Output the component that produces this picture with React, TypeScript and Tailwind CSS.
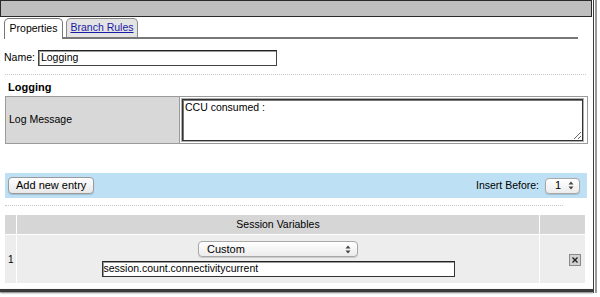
import React from 'react';

const font = { fontFamily: '"Liberation Sans", Arial, sans-serif' };

function Arrows() {
  return (
    <svg width="6" height="9" viewBox="0 0 6 9" className="shrink-0">
      <path d="M3 0.5 L5.5 3.5 H0.5 Z" fill="#444" />
      <path d="M3 8.5 L5.5 5.5 H0.5 Z" fill="#444" />
    </svg>
  );
}

function MacSelect({ label, className }: { label: string; className: string }) {
  return (
    <div
      className={
        'flex items-center justify-between rounded-[4px] border border-[#a8a8a8] bg-gradient-to-b from-white to-[#ececec] shadow-[0_1px_1px_rgba(0,0,0,0.15)] text-[11px] text-black ' +
        className
      }
    >
      <span>{label}</span>
      <Arrows />
    </div>
  );
}

function DeleteIcon() {
  return (
    <div className="w-[12px] h-[12px] border border-[#8a8a8a] bg-[#d0d0d0] flex items-center justify-center">
      <svg width="8" height="8" viewBox="0 0 8 8">
        <path d="M1.5 1.5 L6.5 6.5 M6.5 1.5 L1.5 6.5" stroke="#222" strokeWidth="1.4" />
      </svg>
    </div>
  );
}

export default function App() {
  return (
    <div className="w-[600px] h-[297px] bg-white flex overflow-hidden text-[10px] text-black" style={font}>
      <div className="w-[593px] flex flex-col">
        {/* title bar */}
        <div className="h-[17px] w-[592px] bg-[#bfbfbf] border border-[#2a2a2a]" />

        {/* tabs */}
        <div className="flex items-end h-[22px] pl-[4px] pr-[15px]">
          <div className="h-[21px] w-[59px] border border-b-0 border-[#777] rounded-t-[5px] bg-white flex items-center justify-center text-[10.5px]">
            Properties
          </div>
          <div className="flex-1 flex items-end border-b-2 border-[#777] h-full">
            <div className="ml-[3px] h-[19px] w-[72px] border border-b-0 border-[#888] rounded-t-[5px] bg-[#e4e4e4] flex items-center justify-center">
              <span className="text-[#1a1aa6] underline text-[10.5px]">Branch Rules</span>
            </div>
          </div>
        </div>

        {/* name */}
        <div className="flex items-center mt-[10px] pl-[4px] h-[17px]">
          <span className="mr-[3px] text-[10.5px]">Name:</span>
          <div className="w-[239px] h-[16px] border border-[#444] border-t-[#222] shadow-[inset_1px_1px_0_#999] flex items-center pl-[2px] text-[10.5px]">
            Logging
          </div>
        </div>

        <div className="mt-[8px] ml-[5px] w-[581px] border-t border-dotted border-[#c8c8c8]" />

        {/* logging section */}
        <div className="mt-[5px] ml-[8px] font-bold text-[11px] leading-[14px]">Logging</div>
        <div className="mt-[2px] ml-[5px] w-[583px] h-[48px] flex border border-[#9a9a9a]">
          <div className="w-[174px] bg-[#d8d8d8] border-r border-[#9a9a9a] flex items-center pl-[3px] text-[10.5px]">
            Log Message
          </div>
          <div className="flex-1 p-[2px] pr-[4px]">
            <textarea
              readOnly
              value="CCU consumed :"
              className="w-full h-full border border-[#333] shadow-[inset_1px_1px_0_#777] ring-1 ring-[#b0b0b0] pl-[2px] pt-[1px] text-[10.5px] leading-[13px] outline-none"
              style={font}
            />
          </div>
        </div>

        {/* add entry band */}
        <div className="mt-[29px] ml-[5px] w-[582px] h-[25px] bg-[#bde0f5] flex items-center justify-between pl-[3px] pr-[7px]">
          <div className="h-[17px] px-[7px] rounded-[4px] border border-[#9a9a9a] bg-gradient-to-b from-white to-[#e8e8e8] shadow-[0_1px_1px_rgba(0,0,0,0.15)] flex items-center text-[11px]">
            Add new entry
          </div>
          <div className="flex items-center">
            <span className="mr-[6px] text-[10.5px]">Insert Before:</span>
            <MacSelect label="1" className="w-[35px] h-[16px] pl-[9px] pr-[5px]" />
          </div>
        </div>

        <div className="mt-[7px] ml-[5px] w-[558px] border-t border-dotted border-[#c8c8c8]" />

        {/* session variables table */}
        <div className="mt-[9px] ml-[5px] w-[580px] flex flex-col">
          <div className="h-[19px] flex bg-[#d6d6d6]">
            <div className="w-[12px] border-r border-white" />
            <div className="flex-1 flex items-center justify-center border-r border-white text-[10.5px]">
              Session Variables
            </div>
            <div className="w-[45px]" />
          </div>
          <div className="h-[49px] flex bg-[#ededed] border-t border-white">
            <div className="w-[12px] border-r border-white flex items-center pl-[3px]">1</div>
            <div className="flex-1 border-r border-white flex flex-col items-center pt-[6px]">
              <MacSelect label="Custom" className="w-[160px] h-[16px] pl-[8px] pr-[6px]" />
              <div className="mt-[4px] w-[353px] h-[16px] bg-white border border-[#333] border-t-[#222] shadow-[inset_1px_1px_0_#999] flex items-center pl-[1px] text-[10.5px]">
                session.count.connectivitycurrent
              </div>
            </div>
            <div className="w-[45px] flex items-center justify-end pr-[4px] pt-[1px]">
              <DeleteIcon />
            </div>
          </div>
        </div>

        {/* bottom shadow */}
        <div className="mt-[6px] h-[3px] w-[593px] bg-[#3a3a3a] shadow-[0_1px_2px_#777]" />
      </div>

      {/* right window edge */}
      <div className="flex h-[293px]">
        <div className="w-[1px] bg-[#3a3a3a]" />
        <div className="w-[1px] bg-white" />
        <div className="w-[2px] bg-[#9a9a9a]" />
        <div className="w-[3px] bg-white" />
      </div>
    </div>
  );
}
